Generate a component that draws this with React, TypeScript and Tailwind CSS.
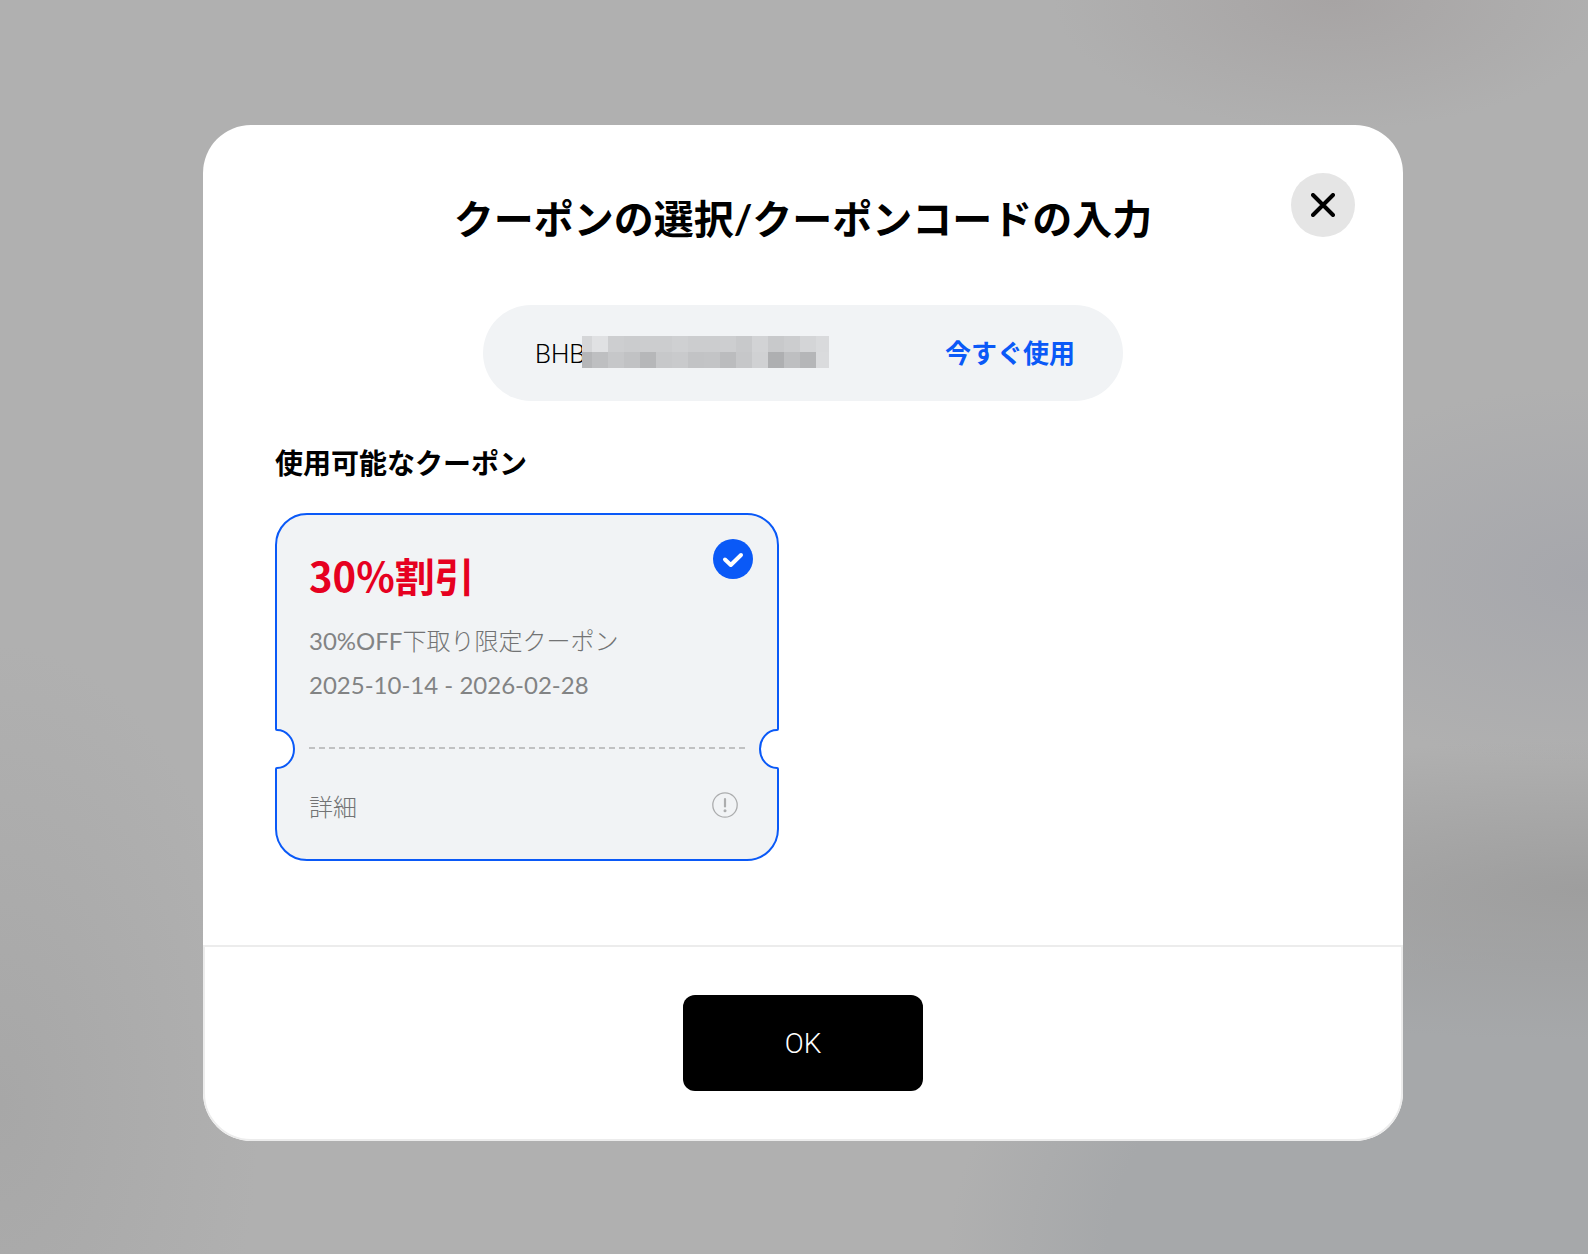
import { useState } from "react";

const MOSAIC = [
  ["#d5d6d8", "#e0e1e3", "#cdced0", "#cbccce", "#cccdcf", "#cccdcf", "#cfd0d2", "#cccdcf", "#cccdcf", "#cdced0", "#c8c9cb", "#d2d3d5", "#c8c9cb", "#cccdcf", "#d4d5d7", "#d9dadc"],
  ["#b5b6b8", "#bebfc1", "#c6c7c9", "#c1c2c4", "#b6b7b9", "#c7c8ca", "#c9cacc", "#c2c3c5", "#c3c4c6", "#bbbcbe", "#c6c7c9", "#d0d1d3", "#aeafb1", "#bebfc1", "#b5b6b8", "#dadbdd"],
];

function Mosaic() {
  return (
    <div aria-hidden="true" className="absolute top-[31px] left-[99px] grid grid-cols-[10px_repeat(14,16px)_13px]">
      {MOSAIC.flat().map((color, i) => (
        <span key={i} className="h-4" style={{ backgroundColor: color }} />
      ))}
    </div>
  );
}

function Notch({ side }: { side: "left" | "right" }) {
  return (
    <svg
      viewBox="0 0 20 40"
      aria-hidden="true"
      className={`absolute top-0 h-10 w-5 ${side === "left" ? "-left-0.5" : "-right-0.5 -scale-x-100"}`}
    >
      <rect width="20" height="40" fill="#f1f3f5" />
      <path d="M0 0H1Q1 1 2 1A17 19 0 0 1 2 39Q1 39 1 40H0Z" fill="#fff" />
      <path d="M1 0Q1 1 2 1A17 19 0 0 1 2 39Q1 39 1 40" fill="none" stroke="#0a59f7" strokeWidth="2" />
    </svg>
  );
}

function Coupon() {
  const [checked, setChecked] = useState(true);
  return (
    <article className="relative rounded-[32px] border-2 border-[#0a59f7] bg-[#f1f3f5] text-2xl leading-8 font-light text-[#727374]">
      <label className="block cursor-pointer px-8 pt-9 pb-7">
        <input
          type="checkbox"
          className="peer sr-only"
          checked={checked}
          onChange={(e) => setChecked(e.target.checked)}
        />
        <svg viewBox="0 0 40 40" className="absolute top-6 right-6 hidden size-10 peer-checked:block" aria-hidden="true">
          <circle cx="20" cy="20" r="20" fill="#0a59f7" />
          <path d="M12 20.500 17.800 26 28 16" fill="none" stroke="#fff" strokeWidth="4" strokeLinecap="round" strokeLinejoin="round" />
        </svg>
        <strong className="block font-['Noto_Sans_CJK_JP',sans-serif] text-[40px] leading-[48px] font-bold text-[#e60020]">
          30%割引
        </strong>
        <span className="mt-[26px] block">
          <span className="font-normal text-[#828384]">30%OFF</span>下取り限定クーポン
        </span>
        <span className="mt-3 block font-normal text-[#828384]">2025-10-14 - 2026-02-28</span>
      </label>
      <div className="relative h-10 px-8 pt-[18px]">
        <Notch side="left" />
        <div className="h-0.5 bg-[repeating-linear-gradient(90deg,#c0c1c2_0_6px,transparent_6px_10px)]" />
        <Notch side="right" />
      </div>
      <button type="button" className="flex w-full items-center justify-between pt-[22px] pr-[39px] pb-9 pl-8">
        <span>詳細</span>
        <svg viewBox="0 0 26 26" className="mb-1 size-[26px]" fill="none" stroke="#acadae" aria-hidden="true">
          <circle cx="13" cy="13" r="12.200" strokeWidth="1.300" />
          <path d="M13 7v7.500" strokeWidth="2.200" strokeLinecap="round" />
          <circle cx="13" cy="18.700" r="1.500" fill="#acadae" stroke="none" />
        </svg>
      </button>
    </article>
  );
}

export default function App() {
  const [code, setCode] = useState("BHB");
  return (
    <div className="flex min-h-screen items-center justify-center bg-[#b0b0b0] bg-[radial-gradient(ellipse_340px_190px_at_100%_46%,#a6a7ac,#a6a7ac00),radial-gradient(ellipse_600px_150px_at_100%_71%,#9e9e9e,#9e9e9e00),radial-gradient(ellipse_280px_130px_at_84%_0%,#a7a4a4,#a7a4a400),radial-gradient(ellipse_640px_400px_at_100%_100%,#a6a8aa_75%,#a6a8aa00),radial-gradient(ellipse_260px_460px_at_0%_88%,#a7a7a7,#a7a7a700)] pt-3 pl-[18px] font-[Lato,'Noto_Sans_CJK_JP',sans-serif] text-black">
      <main role="dialog" aria-labelledby="dialog-title" className="relative w-full max-w-[1200px] overflow-hidden rounded-[48px] bg-white">
        <button
          type="button"
          aria-label="閉じる"
          className="absolute top-12 right-12 flex size-16 items-center justify-center rounded-full bg-[#e5e5e5]"
        >
          <svg viewBox="0 0 24 24" className="size-6" fill="none" stroke="#000" strokeWidth="4" strokeLinecap="round" aria-hidden="true">
            <path d="M2 2l20 20M22 2 2 22" />
          </svg>
        </button>

        <div className="px-[72px] pt-[66px] pb-[84px]">
          <h1 id="dialog-title" className="text-center text-[40px] leading-[56px] font-bold">
            クーポンの選択/クーポンコードの入力
          </h1>

          <form
            className="relative mx-auto mt-[58px] flex h-24 max-w-[640px] items-center justify-between gap-4 rounded-full bg-[#f1f3f5] px-12 text-[26px]"
            onSubmit={(e) => e.preventDefault()}
          >
            <input
              type="text"
              aria-label="クーポンコード"
              className="min-w-0 flex-1 bg-transparent pt-0.5 pl-1 font-[Roboto,sans-serif] font-light outline-none"
              value={code}
              onChange={(e) => setCode(e.target.value)}
            />
            <Mosaic />
            <button type="submit" className="font-bold text-[#0a59f7]">
              今すぐ使用
            </button>
          </form>

          <h2 className="mt-[42px] text-[28px] leading-10 font-bold">使用可能なクーポン</h2>
          <div className="mt-[30px] grid grid-cols-2 gap-12">
            <Coupon />
          </div>
        </div>

        <footer className="flex justify-center rounded-b-[48px] border-2 border-[#ececec] py-12">
          <button type="button" className="h-24 w-60 rounded-xl bg-black pt-0.5 font-[Roboto,sans-serif] text-[28px] font-light text-white">
            OK
          </button>
        </footer>
      </main>
    </div>
  );
}
